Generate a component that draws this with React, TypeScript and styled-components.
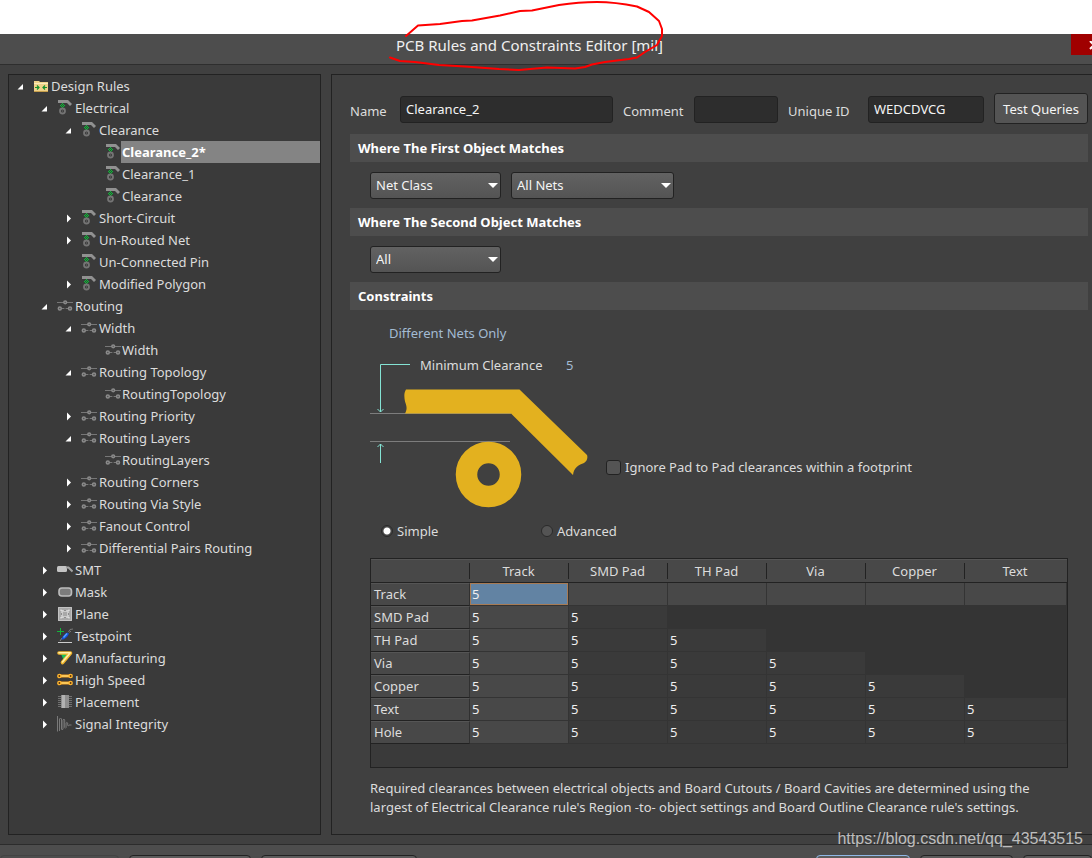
import React from "react";
import styled, { createGlobalStyle } from "styled-components";

const GlobalStyle = createGlobalStyle`
  * { box-sizing: border-box; }
  html, body { margin: 0; background: #ffffff; }
  body, button, input, select {
    font-family: "Noto Sans", "Open Sans", sans-serif;
    font-size: 13px;
    line-height: 18px;
  }
  body { color: #dcdcdc; }
`;

const Page = styled.div`
  position: relative;
  display: flex;
  flex-direction: column;
  height: 100vh;
  padding-top: 34px;
  overflow: hidden;
`;

const Dialog = styled.div`
  flex: 1;
  min-height: 0;
  display: flex;
  flex-direction: column;
  background: #404040;
`;

/* ---------- title bar ---------- */

const TitleBar = styled.header`
  display: flex;
  align-items: flex-start;
  height: 31px;
  background: #4d4d4d;
  border-bottom: 1px solid #2e2e2e;
`;

const Title = styled.h1`
  flex: 1;
  margin: 0;
  padding-right: 12px;
  text-align: center;
  font-size: 15px;
  font-weight: 400;
  line-height: 22px;
  color: #f0f0f0;
`;

const TitleText = styled.span`
  position: relative;
`;

const RedMark = styled.svg`
  position: absolute;
  left: -10px;
  top: -35px;
  width: 290px;
  height: 76px;
  pointer-events: none;
`;

const CloseButton = styled.button`
  width: 21px;
  height: 21px;
  padding: 3px 0 0 18px;
  border: 0;
  background: #a00000;
  overflow: hidden;
  svg { display: block; width: 10px; height: 10px; }
`;

/* ---------- body ---------- */

const Body = styled.main`
  flex: 1;
  min-height: 0;
  display: flex;
  gap: 10px;
  padding: 9px 0 9px 8px;
`;

const TreePanel = styled.nav`
  flex: 0 0 313px;
  border: 1px solid #222222;
  background: #3a3a3a;
  overflow: hidden;
`;

const TreeList = styled.ul`
  list-style: none;
  margin: 0;
  padding: 0;
`;

const TreeRow = styled.div<{ $level: number }>`
  display: flex;
  align-items: center;
  height: 22px;
  padding-left: ${(p) => p.$level * 24}px;
`;

const Toggle = styled.button`
  flex: 0 0 24px;
  height: 22px;
  padding: 0;
  border: 0;
  background: none;
  svg { display: block; }
`;

const ToggleSpace = styled.span`
  flex: 0 0 24px;
`;

const RowIcon = styled.svg`
  flex: 0 0 16px;
  width: 16px;
  height: 16px;
`;

const RowLabel = styled.span<{ $selected?: boolean; $leaf?: boolean }>`
  flex: 1;
  padding-left: ${(p) => (p.$leaf ? 1 : 2)}px;
  line-height: 22px;
  white-space: nowrap;
  color: ${(p) => (p.$selected ? "#ffffff" : "#dcdcdc")};
  font-weight: ${(p) => (p.$selected ? 700 : 400)};
  background: ${(p) => (p.$selected ? "#848484" : "transparent")};
`;

const EditorPanel = styled.section`
  flex: 1;
  min-width: 0;
  padding: 18px 4px 0 18px;
  border: 1px solid #222222;
  border-right: 0;
  overflow: hidden;
`;

const FieldRow = styled.div`
  display: flex;
  align-items: center;
  gap: 10px;
  height: 31px;
`;

const FieldLabel = styled.label<{ $width: number }>`
  flex: 0 0 ${(p) => p.$width}px;
  padding-top: 4px;
  white-space: nowrap;
`;

const TextInput = styled.input<{ $width: number }>`
  flex: 1 1 ${(p) => p.$width}px;
  min-width: 0;
  height: 27px;
  margin: 2px 0 0;
  padding: 0 5px 1px;
  border: 1px solid #222222;
  border-radius: 3px;
  background: #2d2d2d;
  color: #f4f4f4;
`;

const TestButton = styled.button`
  flex: 0 0 94px;
  height: 31px;
  padding: 0;
  border: 1px solid #222222;
  border-radius: 3px;
  background: #545454;
  color: #f4f4f4;
`;

const SectionBar = styled.h2`
  margin: 0;
  padding: 0 8px;
  background: #4d4d4d;
  color: #ffffff;
  font-size: 13px;
  font-weight: 700;
  line-height: 28px;
`;

const FirstBar = styled(SectionBar)`
  margin-top: 10px;
`;

const SelectRow = styled.div`
  display: flex;
  gap: 10px;
  padding: 10px 20px 9px;
`;

const SelectBox = styled.div<{ $width: number }>`
  position: relative;
  width: ${(p) => p.$width}px;
  height: 27px;
  &::after {
    content: "";
    position: absolute;
    right: 3px;
    top: 11px;
    border: 5px solid transparent;
    border-top-color: #ffffff;
    border-bottom: 0;
    pointer-events: none;
  }
  select {
    appearance: none;
    width: 100%;
    height: 100%;
    padding: 0 5px 2px;
    border: 1px solid #222222;
    border-radius: 3px;
    background: linear-gradient(#626262, #545454);
    color: #f4f4f4;
  }
`;

const Constraints = styled.div`
  padding: 14px 20px 0;
`;

const ScopeButton = styled.button`
  display: block;
  height: 18px;
  margin-left: 19px;
  padding: 0;
  border: 0;
  background: none;
  color: #a3bbd3;
`;

const DiagramRow = styled.div`
  display: flex;
  gap: 10px;
  margin-top: 14px;
`;

const Diagram = styled.div`
  flex: 0 0 226px;
  display: grid;
  > * { grid-area: 1 / 1; }
`;

const DiagramCaption = styled.div`
  display: flex;
  align-items: center;
  height: 18px;
  padding-left: 50px;
  white-space: nowrap;
  label { flex: 0 0 146px; }
  input {
    width: 30px;
    height: 18px;
    padding: 0;
    border: 0;
    background: none;
    color: #a3bbd3;
  }
`;

const CheckLabel = styled.label`
  display: flex;
  align-items: center;
  gap: 4px;
  height: 18px;
  margin-top: 102px;
  white-space: nowrap;
`;

const CheckBox = styled.input`
  appearance: none;
  width: 15px;
  height: 15px;
  margin: 0;
  border: 1px solid #222222;
  border-radius: 3px;
  background: #545454;
`;

const ModeRow = styled.div`
  display: flex;
  padding: 12px 11px 0;
`;

const RadioLabel = styled.label`
  display: flex;
  align-items: center;
  gap: 4px;
  flex: 0 0 160px;
`;

const Radio = styled.input`
  appearance: none;
  width: 12px;
  height: 12px;
  margin: 0;
  border: 1px solid #2a2a2a;
  border-radius: 50%;
  background: #545454;
  &:checked { background: radial-gradient(circle, #ffffff 3px, #484848 4px); }
`;

/* ---------- clearance matrix ---------- */

const MatrixFrame = styled.div`
  margin-top: 18px;
  padding-bottom: 23px;
  border: 1px solid #222222;
  background: #3a3a3a;
`;

const Matrix = styled.table`
  width: 100%;
  table-layout: fixed;
  border-collapse: separate;
  border-spacing: 0;
`;

const ColHead = styled.th<{ $last?: boolean }>`
  width: ${(p) => (p.$last ? "auto" : "99px")};
  height: 24px;
  padding: 0 2px 0 0;
  font-weight: 400;
  border-bottom: 1px solid #222222;
  border-top: 1px solid #555555;
  background:
    linear-gradient(#222222, #222222) right 0 center / ${(p) => (p.$last ? 0 : 1)}px 16px no-repeat,
    #484848;
`;

const RowHead = styled.th`
  height: 23px;
  padding: 0 3px 1px;
  text-align: left;
  font-weight: 400;
  border-top: 1px solid #555555;
  border-right: 1px solid #303030;
  border-bottom: 1px solid #222222;
  background: #484848;
`;

type CellKind = "current" | "light" | "dark" | "off";

const cellFill: Record<CellKind, string> = {
  current: "#6283a3",
  light: "#484848",
  dark: "#3a3a3a",
  off: "#343434",
};

const Cell = styled.td<{ $kind: CellKind }>`
  height: 23px;
  padding: 0 2px;
  color: #f0f0f0;
  background: ${(p) => cellFill[p.$kind]};
  border-right: 1px solid #343434;
  border-bottom: 1px solid #343434;
  box-shadow: ${(p) => (p.$kind === "current" ? "inset 0 0 0 1px #a87b54" : "none")};
`;

const Note = styled.p`
  margin: 11px 0 0;
  max-width: 680px;
  line-height: 19px;
`;

/* ---------- footer ---------- */

const Footer = styled.footer`
  display: flex;
  justify-content: space-between;
  height: 14px;
  padding-top: 10px;
  border-top: 1px solid #2c2c2c;
  background: #4d4d4d;
  overflow: hidden;
`;

const FooterGroup = styled.div`
  display: flex;
  gap: 10px;
`;

const FooterButton = styled.button<{ $width: number; $tone?: "primary" | "disabled" }>`
  flex: 0 0 ${(p) => p.$width}px;
  height: 31px;
  border: 1px solid
    ${(p) => (p.$tone === "primary" ? "#8fb8e6" : p.$tone === "disabled" ? "#434343" : "#222222")};
  border-radius: 4px;
  background: ${(p) => (p.$tone === "disabled" ? "#4d4d4d" : "#5c5c5c")};
`;

const Watermark = styled.div`
  position: absolute;
  right: 9px;
  bottom: 9px;
  font-family: "Liberation Sans", sans-serif;
  font-size: 16px;
  line-height: 20px;
  color: #bdbdbd;
`;

/* ---------- icons ---------- */

type IconName =
  | "folder" | "clearance" | "routing" | "smt" | "mask" | "plane"
  | "testpoint" | "manufacturing" | "speed" | "placement" | "signal";

const drawings: Record<IconName, React.ReactNode> = {
  folder: (
    <>
      <path d="M1 14V3h5l1 1h8v10z" fill="#efd28a" />
      <path d="M1 5h14v1H1z" fill="#fbecbb" />
      <path d="M1 13h14v1H1z" fill="#c79f4c" />
      <path d="M2 9.500h4M4 7.500l2 2-2 2M14 9.500h-4M12 7.500l-2 2 2 2" fill="none" stroke="#14902c" strokeWidth="1.2" />
    </>
  ),
  clearance: (
    <>
      <path d="M1 0h10l4 4-2 2-3-3H1z" fill="#919191" />
      <path d="M5 3h1v1h1v1h1v2H7v1H6v1H5V8H4V7H3V5h1V4h1z" fill="#26502f" />
      <path d="M5 3h1v1H5zM4 4h1v1H4zM6 4h1v1H6zM3 5h1v1H3zM5 5h1v1H5zM7 5h1v1H7zM4 6h1v1H4zM6 6h1v1H6zM5 7h1v1H5z" fill="#14b53c" />
      <circle cx="5.500" cy="11" r="2.500" fill="#383838" stroke="#757575" strokeWidth="1.800" />
      <circle cx="5.500" cy="11" r=".8" fill="#666" />
    </>
  ),
  routing: (
    <g fill="#505050" stroke="#8a8a8a">
      <path d="M0 4.500h16M4 10.500h8" strokeWidth="1" stroke="#777" />
      <path d="M7 10h2v1H7z" stroke="none" />
      <circle cx="8.200" cy="4.300" r="1.400" strokeWidth="1.500" />
      <circle cx="2.800" cy="10.400" r="1.500" strokeWidth="1.500" />
      <circle cx="13" cy="10.400" r="1.500" strokeWidth="1.500" />
    </g>
  ),
  smt: (
    <>
      <rect x="0" y="4" width="10" height="6" rx="1.500" fill="#c4c4c4" />
      <path d="M9 5.500h2.500l4 4" fill="none" stroke="#a4a4a4" strokeWidth="2" />
    </>
  ),
  mask: <rect x="2" y="4" width="12.500" height="8" rx="3" fill="#7c7c7c" stroke="#bcbcbc" strokeWidth="1.600" />,
  plane: (
    <>
      <path d="M1 1h14v14H1z" fill="#a8a8a8" />
      <path d="M1.500 1.500h13v13h-13z" fill="none" stroke="#c2c2c2" strokeWidth="1" />
      <path d="M4 3.500l1.500 1.500h5l1.500-1.500M4 12.500l1.500-1.500h5l1.500 1.500M3.500 4l1.500 1.500v5l-1.500 1.500M12.500 4l-1.500 1.500v5l1.500 1.500" fill="none" stroke="#eeeeee" strokeWidth="1" />
      <path d="M7 4h2v1H7zM7 11h2v1H7zM4 7h1v2H4zM11 7h1v2h-1z" fill="#8c8c8c" />
    </>
  ),
  testpoint: (
    <>
      <path d="M3.500 0v7M0 3.500h7" stroke="#12b53a" strokeWidth="1" />
      <path d="M3 13l2-3" stroke="#888" strokeWidth="1" />
      <path d="M4.500 11.500c0-2 3-6 6-7l1.500 1c-1 3-4.500 6.500-7.500 6z" fill="#1450d8" />
      <path d="M6.500 9.500l3.500-4" stroke="#55a5ff" strokeWidth="1.300" />
      <path d="M11.500 4l1.500-2.500 3-.5M12.500 4.500l1.500-1.500" stroke="#777" strokeWidth="1" fill="none" />
      <path d="M1 14.500h14" stroke="#cccccc" />
    </>
  ),
  manufacturing: (
    <>
      <path d="M4 4h8l-5 7z" fill="#17c25b" />
      <path d="M2 3h11.500L5.500 12.500" fill="none" stroke="#efb32c" strokeWidth="3.600" strokeLinecap="round" strokeLinejoin="round" />
      <path d="M2 2.800h11.300L5.500 12" fill="none" stroke="#fff0a8" strokeWidth="1.600" strokeLinecap="round" strokeLinejoin="round" />
    </>
  ),
  speed: (
    <>
      {[4, 11].map((y) => (
        <g key={y}>
          <path d={`M2 ${y}h12`} stroke="#f29a1a" strokeWidth="3" />
          <path d={`M3 ${y}h10`} stroke="#ffe680" strokeWidth="1.200" />
          <circle cx="2.400" cy={y} r="1.600" fill="#5b3710" stroke="#ffb52e" strokeWidth="1.400" />
          <circle cx="13.600" cy={y} r="1.600" fill="#5b3710" stroke="#ffb52e" strokeWidth="1.400" />
        </g>
      ))}
    </>
  ),
  placement: (
    <>
      <path d="M1 2.500h14M1 4.500h14M1 6.500h14M1 8.500h14M1 10.500h14M1 12.500h14" stroke="#707070" />
      <path d="M4 1h8v13H4z" fill="#8e8e8e" />
      <path d="M5 1h3v13H5z" fill="#b2b2b2" />
    </>
  ),
  signal: (
    <path
      d="M.5 0v15.500M2.500 15V3q1-2 2 0v10q.7 2 1.500 0V4q.8-2 1.700 0v7.500q.7 1.500 1.400 0V7q.8-1.500 1.600 0v2.500q.8 1 1.300-.5h2.500"
      fill="none"
      stroke="#787878"
      strokeWidth="1"
    />
  ),
};

const Icon = ({ name }: { name: IconName }) => (
  <RowIcon viewBox="0 0 16 16" aria-hidden="true">{drawings[name]}</RowIcon>
);

/* ---------- tree ---------- */

interface Node {
  label: string;
  icon: IconName;
  open?: boolean;
  leaf?: boolean;
  selected?: boolean;
  children?: Node[];
}

const tree: Node[] = [
  {
    label: "Design Rules", icon: "folder", open: true, children: [
      {
        label: "Electrical", icon: "clearance", open: true, children: [
          {
            label: "Clearance", icon: "clearance", open: true, children: [
              { label: "Clearance_2*", icon: "clearance", leaf: true, selected: true },
              { label: "Clearance_1", icon: "clearance", leaf: true },
              { label: "Clearance", icon: "clearance", leaf: true },
            ],
          },
          { label: "Short-Circuit", icon: "clearance" },
          { label: "Un-Routed Net", icon: "clearance" },
          { label: "Un-Connected Pin", icon: "clearance", leaf: true },
          { label: "Modified Polygon", icon: "clearance" },
        ],
      },
      {
        label: "Routing", icon: "routing", open: true, children: [
          { label: "Width", icon: "routing", open: true, children: [{ label: "Width", icon: "routing", leaf: true }] },
          { label: "Routing Topology", icon: "routing", open: true, children: [{ label: "RoutingTopology", icon: "routing", leaf: true }] },
          { label: "Routing Priority", icon: "routing" },
          { label: "Routing Layers", icon: "routing", open: true, children: [{ label: "RoutingLayers", icon: "routing", leaf: true }] },
          { label: "Routing Corners", icon: "routing" },
          { label: "Routing Via Style", icon: "routing" },
          { label: "Fanout Control", icon: "routing" },
          { label: "Differential Pairs Routing", icon: "routing" },
        ],
      },
      { label: "SMT", icon: "smt" },
      { label: "Mask", icon: "mask" },
      { label: "Plane", icon: "plane" },
      { label: "Testpoint", icon: "testpoint" },
      { label: "Manufacturing", icon: "manufacturing" },
      { label: "High Speed", icon: "speed" },
      { label: "Placement", icon: "placement" },
      { label: "Signal Integrity", icon: "signal" },
    ],
  },
];

const Branch = ({ nodes, level }: { nodes: Node[]; level: number }) => (
  <TreeList>
    {nodes.map((node) => (
      <li key={node.label}>
        <TreeRow $level={level}>
          {node.leaf ? (
            <ToggleSpace />
          ) : (
            <Toggle aria-label={`Toggle ${node.label}`} aria-expanded={!!node.open}>
              <svg width="24" height="22" viewBox="0 0 24 22">
                <path d={node.open ? "M14 9v5.500H8.500z" : "M10 7.500l4 4-4 4z"} fill="#ffffff" />
              </svg>
            </Toggle>
          )}
          <Icon name={node.icon} />
          <RowLabel $selected={node.selected} $leaf={level === 3}>{node.label}</RowLabel>
        </TreeRow>
        {node.open && node.children && <Branch nodes={node.children} level={level + 1} />}
      </li>
    ))}
  </TreeList>
);

/* ---------- matrix data ---------- */

const columns = ["Track", "SMD Pad", "TH Pad", "Via", "Copper", "Text"];
const rows = [...columns, "Hole"];

const kindOf = (r: number, c: number): CellKind => {
  if (r === 0 && c === 0) return "current";
  if (r === 0 || c === 0) return "light";
  return c <= r ? "dark" : "off";
};

const ClearanceDrawing = () => (
  <svg width="226" height="154" viewBox="0 0 226 154" aria-hidden="true">
    <path d="M0 57.500h141M0 85.500h140" stroke="#7d7d7d" strokeWidth="1" />
    <path d="M36 33.500h113.500L217 99c1 3 0 6-3 8-5 2-10 4-11 12l-62-61.500H35c3-5 1-9 0-12-1-5-1-9 1-12z" fill="#e3b11f" />
    <circle cx="118.500" cy="118.500" r="22" fill="none" stroke="#e3b11f" strokeWidth="21.500" />
    <path d="M40 8.500H10.500V56M7.500 53l3 3 3-3M10.500 107V88M7.500 91l3-3 3 3" fill="none" stroke="#84e3d4" strokeWidth="1" />
  </svg>
);

export default function App() {
  return (
    <Page>
      <GlobalStyle />
      <Dialog>
        <TitleBar>
          <Title>
            <TitleText>
              PCB Rules and Constraints Editor [mil]
              <RedMark viewBox="384 0 290 76" aria-hidden="true">
                <path
                  d="M404 36L416 25.500L438 24L460 21L470 20.500L498 15.500L518 11L530 10.500L557 5Q577 2 595 2Q613 2 635 6.500L647 12L657 21L660 29V36L655 45L643 52L635 57.500L627 59L603 62L590 64.500L583 67L573 68.500L545 67.500L517 70L497 69L463 66.500L437 65L413 62L398 61L388 57.500"
                  fill="none" stroke="#ff0000" strokeWidth="2" strokeLinejoin="round" strokeLinecap="round"
                />
              </RedMark>
            </TitleText>
          </Title>
          <CloseButton aria-label="Close">
            <svg viewBox="0 0 10 10"><path d="M1 0l8 8M9 0L1 8" stroke="#fff" strokeWidth="2" /></svg>
          </CloseButton>
        </TitleBar>

        <Body>
          <TreePanel aria-label="Rules">
            <Branch nodes={tree} level={0} />
          </TreePanel>

          <EditorPanel>
            <FieldRow>
              <FieldLabel htmlFor="name" $width={40}>Name</FieldLabel>
              <TextInput id="name" $width={213} defaultValue="Clearance_2" />
              <FieldLabel htmlFor="comment" $width={61}>Comment</FieldLabel>
              <TextInput id="comment" $width={84} />
              <FieldLabel htmlFor="uid" $width={70}>Unique ID</FieldLabel>
              <TextInput id="uid" $width={116} defaultValue="WEDCDVCG" />
              <TestButton>Test Queries</TestButton>
            </FieldRow>

            <FirstBar>Where The First Object Matches</FirstBar>
            <SelectRow>
              <SelectBox $width={131}>
                <select aria-label="First object scope"><option>Net Class</option></select>
              </SelectBox>
              <SelectBox $width={163}>
                <select aria-label="First object nets"><option>All Nets</option></select>
              </SelectBox>
            </SelectRow>

            <SectionBar>Where The Second Object Matches</SectionBar>
            <SelectRow>
              <SelectBox $width={131}>
                <select aria-label="Second object scope"><option>All</option></select>
              </SelectBox>
            </SelectRow>

            <SectionBar>Constraints</SectionBar>
            <Constraints>
              <ScopeButton>Different Nets Only</ScopeButton>
              <DiagramRow>
                <Diagram>
                  <ClearanceDrawing />
                  <DiagramCaption>
                    <label htmlFor="minimum">Minimum Clearance</label>
                    <input id="minimum" defaultValue="5" />
                  </DiagramCaption>
                </Diagram>
                <CheckLabel>
                  <CheckBox type="checkbox" />
                  Ignore Pad to Pad clearances within a footprint
                </CheckLabel>
              </DiagramRow>
              <ModeRow>
                <RadioLabel><Radio type="radio" name="mode" defaultChecked />Simple</RadioLabel>
                <RadioLabel><Radio type="radio" name="mode" />Advanced</RadioLabel>
              </ModeRow>

              <MatrixFrame>
                <Matrix>
                  <thead>
                    <tr>
                      <ColHead />
                      {columns.map((name, i) => (
                        <ColHead key={name} scope="col" $last={i === columns.length - 1}>{name}</ColHead>
                      ))}
                    </tr>
                  </thead>
                  <tbody>
                    {rows.map((name, r) => (
                      <tr key={name}>
                        <RowHead scope="row">{name}</RowHead>
                        {columns.map((col, c) => (
                          <Cell key={col} $kind={kindOf(r, c)}>{c <= r ? "5" : ""}</Cell>
                        ))}
                      </tr>
                    ))}
                  </tbody>
                </Matrix>
              </MatrixFrame>

              <Note>
                Required clearances between electrical objects and Board Cutouts / Board Cavities are determined
                using the largest of Electrical Clearance rule's Region -to- object settings and Board Outline
                Clearance rule's settings.
              </Note>
            </Constraints>
          </EditorPanel>
        </Body>

        <Footer>
          <FooterGroup>
            <FooterButton $width={119} $tone="disabled" disabled aria-label="Rule Wizard" />
            <FooterButton $width={122} aria-label="Priorities" />
            <FooterButton $width={156} aria-label="Create Default Rules" />
          </FooterGroup>
          <FooterGroup>
            <FooterButton $width={94} $tone="primary" aria-label="OK" />
            <FooterButton $width={93} aria-label="Cancel" />
            <FooterButton $width={69} aria-label="Apply" />
          </FooterGroup>
        </Footer>
      </Dialog>
      <Watermark>https://blog.csdn.net/qq_43543515</Watermark>
    </Page>
  );
}
